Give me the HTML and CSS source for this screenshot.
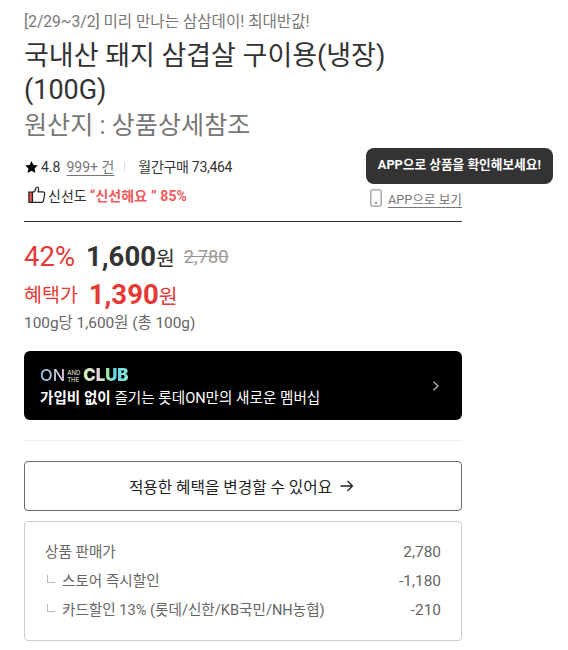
FILE: index.html
```html
<!DOCTYPE html>
<html lang="ko">

<head>
    <meta charset="UTF-8">
    <title>국내산 돼지 삼겹살 구이용(냉장)(100G)</title>
    <link rel="stylesheet" href="styles.css">
</head>

<body>
    <div class="product">
        <p class="promo">[2/29~3/2] 미리 만나는 삼삼데이! 최대반값!</p>
        <h1 class="title">국내산 돼지 삼겹살 구이용(냉장)<br>(100G)</h1>
        <p class="origin">원산지 : 상품상세참조</p>

        <div class="review">
            <svg class="star" width="13" height="12" viewBox="0 0 13 12"><path d="M6.5 0l1.9 4 4.4.5-3.3 3 .9 4.4-3.9-2.2-3.9 2.2.9-4.4-3.3-3 4.4-.5z"/></svg>
            <span class="score">4.8</span>
            <a class="count">999+ 건</a>
            <span class="bar"></span>
            <span class="monthly">월간구매 73,464</span>
        </div>

        <div class="fresh">
            <svg class="thumb" width="18" height="18" viewBox="0 0 18 18">
                <path d="M.9 6.2h3.6v10.2H.9z" fill="#e8544f" stroke="#222" stroke-width="1.2"/>
                <path d="M4.500 6.400c2-.5 3-2 3.300-4.300.2-1.500 2.400-1.500 2.700.1.200 1.200-.1 2.400-.4 3.600h4.700c1.400 0 2.100.9 1.900 2.100l-1.200 6.700c-.2 1.100-.9 1.800-2 1.800h-9z" fill="#fff" stroke="#222" stroke-width="1.2" stroke-linejoin="round"/>
            </svg>
            <span class="fresh-label">신선도</span>
            <strong class="fresh-value">“신선해요 ” 85%</strong>
            <div class="app">
                <svg width="12" height="18" viewBox="0 0 12 18"><rect x=".8" y=".8" width="10.400" height="16.400" rx="1.800" fill="none" stroke="#999" stroke-width="1.300"/><circle cx="6" cy="14" r="1.200" fill="#999"/></svg>
                <a class="app-link">APP으로 보기</a>
                <div class="tooltip">APP으로 상품을 확인해보세요!</div>
            </div>
        </div>

        <div class="price">
            <span class="rate">42%</span>
            <strong class="num">1,600</strong><span class="won">원</span>
            <del class="before">2,780</del>
        </div>
        <div class="price benefit">
            <span class="benefit-label">혜택가</span>
            <strong class="num">1,390</strong><span class="won">원</span>
        </div>
        <p class="unit">100g당 1,600원 (총 100g)</p>

        <div class="club">
            <div class="club-text">
                <div class="logo">
                    <span class="logo-on">ON</span>
                    <span class="logo-and"><i>AND</i><i>THE</i></span>
                    <span class="logo-club">CLUB</span>
                </div>
                <p class="club-desc"><b>가입비 없이</b> 즐기는 롯데ON만의 새로운 멤버십</p>
            </div>
            <svg width="8" height="10" viewBox="0 0 8 10"><path d="M1.500 .8l4.500 4.200-4.500 4.200" fill="none" stroke="#bbb" stroke-width="1.300"/></svg>
        </div>

        <hr class="line">

        <button class="change">
            <span>적용한 혜택을 변경할 수 있어요</span>
            <svg width="14" height="12" viewBox="0 0 14 12"><path d="M.5 6h12M7.500 1l5 5-5 5" fill="none" stroke="#222" stroke-width="1.300"/></svg>
        </button>

        <ul class="detail">
            <li><span class="name">상품 판매가</span><span class="amount">2,780</span></li>
            <li><span class="name sub">스토어 즉시할인</span><span class="amount">-1,180</span></li>
            <li><span class="name sub">카드할인 13% (롯데/신한/KB국민/NH농협)</span><span class="amount">-210</span></li>
        </ul>
    </div>
</body>

</html>
```
FILE: styles.css
```css
* {
    margin: 0;
    padding: 0;
    box-sizing: border-box;
}

body {
    background: #fff;
    color: #333;
    font-family: Roboto, "Noto Sans CJK KR", sans-serif;
    font-size: 14px;
}

.product {
    width: 438px;
    margin-left: 24px;
    padding-top: 10px;
    white-space: nowrap;
}

.promo {
    height: 29px;
    line-height: 24px;
    font-size: 15.6px;
    color: #777;
}

.title {
    font-size: 27px;
    font-weight: 400;
    line-height: 34px;
    letter-spacing: -0.02px;
}

.origin {
    font-size: 25.1px;
    line-height: 38px;
    color: #777;
}

.review {
    display: flex;
    align-items: center;
    height: 26px;
    margin-top: 9px;
    line-height: 20px;
}
.star {
    margin-left: 1px;
}
.score {
    margin-left: 3px;
}
.count {
    margin-left: 6px;
    color: #777;
    text-decoration: underline;
    text-underline-offset: 3px;
}
.bar {
    width: 1px;
    height: 10px;
    margin: 0 13px 0 10px;
    background: #ddd;
}
.monthly {
    letter-spacing: -0.3px;
}

.fresh {
    display: flex;
    align-items: center;
    height: 42px;
    padding-bottom: 11px;
    border-bottom: 1px solid #333;
}
.thumb {
    margin-left: 4px;
}
.fresh-label {
    margin-left: 2px;
}
.fresh-value {
    margin-left: 3px;
    letter-spacing: 0.1px;
    color: #f0595c;
}

.app {
    position: relative;
    display: flex;
    align-items: center;
    margin-left: auto;
    padding-top: 6px;
    color: #777;
}
.app-link {
    margin-left: 6px;
    font-size: 12.7px;
    text-decoration: underline;
    text-underline-offset: 3px;
}
.tooltip {
    position: absolute;
    left: -4px;
    bottom: 24px;
    width: 187px;
    height: 36px;
    line-height: 34px;
    border-radius: 8px;
    background: #333;
    color: #fff;
    font-size: 12.7px;
    font-weight: 700;
    text-align: center;
}

.price {
    display: flex;
    align-items: baseline;
    height: 37px;
    line-height: 37px;
    margin-top: 16px;
}
.rate {
    font-size: 27.5px;
    color: #e53935;
}
.num {
    margin-left: 11px;
    font-size: 27.5px;
    font-weight: 700;
}
.won {
    font-size: 20.5px;
}
.before {
    margin-left: 9px;
    font-size: 18.3px;
    color: #999;
    transform: translateY(-3px);
}
.benefit {
    margin-top: 1px;
    color: #e53935;
}
.benefit-label {
    font-size: 19.5px;
    transform: translateY(-2px);
}

.unit {
    height: 24px;
    line-height: 20px;
    font-size: 15.4px;
    color: #666;
}

.club {
    display: flex;
    align-items: center;
    justify-content: space-between;
    height: 69px;
    margin-top: 14px;
    padding: 0 22px 0 16px;
    border-radius: 6px;
    background: #000;
    color: #fff;
}
.club-text {
    padding-top: 8px;
}
.logo {
    display: flex;
    align-items: center;
    height: 17px;
    font-family: Inter, sans-serif;
}
.logo-on,
.logo-club {
    background: linear-gradient(90deg, #8ec5e8, #e8c8dc);
    background-clip: text;
    -webkit-background-clip: text;
    color: transparent;
    font-size: 16.5px;
    font-weight: 500;
    line-height: 17px;
}
.logo-club {
    background-image: linear-gradient(90deg, #c7efb0, #f1d5e5 30%, #a9e89a 50%, #62d5f5 70%, #9aeed0);
    font-size: 16.8px;
    font-weight: 900;
}
.logo-and {
    display: flex;
    flex-direction: column;
    width: 13px;
    margin: 0 3px 0 2px;
    font-size: 6px;
    font-weight: 600;
    line-height: 7px;
    color: #bba;
}
.logo-and i {
    font-style: normal;
}
.club-desc {
    height: 28px;
    line-height: 28px;
    font-size: 14.6px;
}

.line {
    height: 1px;
    margin: 20px 0;
    border: 0;
    background: #eee;
}

.change {
    display: flex;
    align-items: center;
    justify-content: center;
    gap: 8px;
    width: 100%;
    height: 50px;
    padding-right: 3px;
    border: 1px solid #666;
    border-radius: 4px;
    background: #fff;
    color: #222;
    font-family: inherit;
    font-size: 15.7px;
}

.detail {
    height: 120px;
    margin-top: 10px;
    padding: 15px 20px;
    border: 1px solid #ccc;
    border-radius: 4px;
    list-style: none;
    color: #666;
}
.detail li {
    display: flex;
    align-items: center;
    justify-content: space-between;
    height: 29px;
}
.name {
    padding-bottom: 2px;
    font-size: 14.6px;
}
.sub::before {
    content: "";
    display: inline-block;
    width: 7px;
    height: 7px;
    margin: 0 7px 3px 2px;
    border-left: 1px solid #bbb;
    border-bottom: 1px solid #bbb;
}
.amount {
    font-size: 15.4px;
}
```
